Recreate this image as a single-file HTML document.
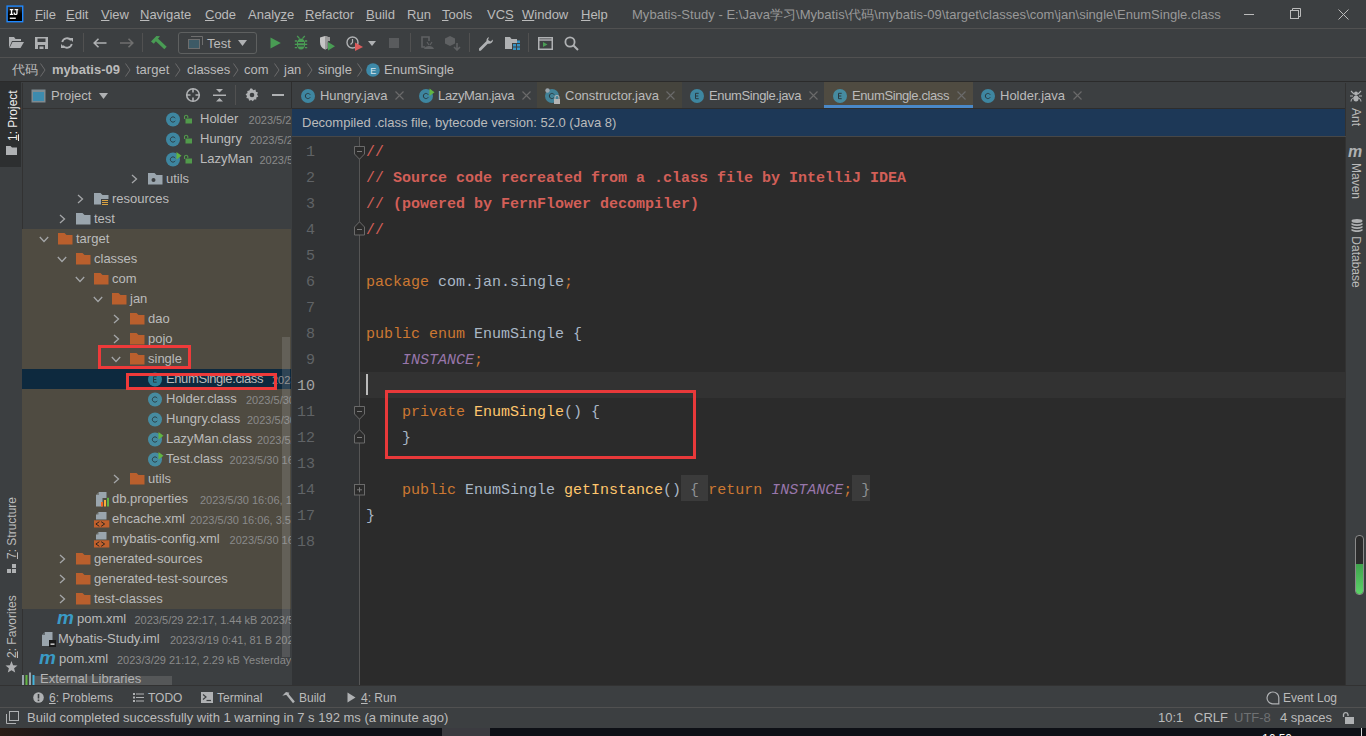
<!DOCTYPE html>
<html><head><meta charset="utf-8">
<style>
*{margin:0;padding:0;box-sizing:border-box}
html,body{width:1366px;height:736px;overflow:hidden;background:#3c3f41;font-family:"Liberation Sans",sans-serif;font-size:13px;color:#bbbbbb}
.a{position:absolute}
.t{position:absolute;white-space:nowrap;line-height:16px}
.sep{position:absolute;background:#323232}
.code{font-family:"Liberation Mono",monospace;font-size:15px;line-height:26px;white-space:pre;color:#a9b7c6}
.kw{color:#cc7832}
.cm{color:#d25f58;font-weight:bold}
.st{color:#9876aa;font-style:italic}
.fn{color:#ffc66d}
.dt{color:#787878}
.fb{background:#3b3b3b}
.u{text-decoration:underline}
</style></head>
<body>
<!-- menubar -->
<div class="a" style="left:0;top:0;width:1366px;height:28px;background:#3c3f41"></div>
<div class="sep" style="left:0;top:28px;width:1366px;height:1px;background:#515151"></div>
<!-- toolbar -->
<div class="sep" style="left:0;top:57px;width:1366px;height:1px;background:#515151"></div>
<!-- breadcrumb -->
<div class="sep" style="left:0;top:81px;width:1366px;height:1px;background:#2b2b2b"></div>
<!-- left stripe -->
<div class="a" style="left:0;top:83px;width:22px;height:603px;background:#3c3f41"></div>
<div class="a" style="left:0;top:82px;width:21px;height:85px;background:#2d2f30"></div>
<!-- project panel -->
<div class="a" style="left:22px;top:83px;width:270px;height:603px;background:#3c3f41;border-left:1px solid #323232"></div>
<div class="sep" style="left:22px;top:108px;width:270px;height:1px"></div>
<!-- editor area -->
<div class="a" style="left:291px;top:82px;width:1054px;height:26px;background:#3c3f41;border-left:1px solid #2e2e2e"></div>
<div class="a" style="left:292px;top:108px;width:1053px;height:1px;background:#2d2d2d"></div>
<div class="a" style="left:292px;top:109px;width:1053px;height:27px;background:#1d3857"></div>
<div class="a" style="left:292px;top:136px;width:1054px;height:550px;background:#2b2b2b"></div>
<!-- right stripe -->
<div class="a" style="left:1345px;top:83px;width:21px;height:603px;background:#3c3f41;border-left:1px solid #323232"></div>
<!-- bottom bar -->
<div class="sep" style="left:0;top:685px;width:1366px;height:1px"></div>
<div class="sep" style="left:0;top:707px;width:1366px;height:1px;background:#515151"></div>
<!-- taskbar -->
<div class="a" style="left:0;top:728px;width:1366px;height:8px;background:#16181b"></div>


<!-- MENU -->
<svg class="a" style="left:6px;top:5px" width="18" height="18" viewBox="0 0 18 18"><defs><linearGradient id="lg" x1="0" y1="0" x2="0" y2="1"><stop offset="0" stop-color="#3a3a3a"/><stop offset="0.5" stop-color="#000"/></linearGradient></defs><rect x="1.1" y="1.1" width="15.6" height="15.6" fill="url(#lg)" stroke="#1e88ff" stroke-width="1.4"/><path d="M3.8 4H7.3V5.2H6.2V8.8H7.3V10H3.8V8.8H4.9V5.2H3.8Z" fill="#fff"/><path d="M8.6 4H12.2V5.2H11.6V8.4A1.7 1.7 0 0 1 9.9 10.1H9.3A1.7 1.7 0 0 1 7.6 8.4V7.6H8.9V8.3A0.5 0.5 0 0 0 9.4 8.8H9.8A0.5 0.5 0 0 0 10.3 8.3V5.2H8.6Z" fill="#fff"/><rect x="3.8" y="12.6" width="6" height="1.3" fill="#fff"/></svg>
<div class="t" style="left:35px;top:7px"><u>F</u>ile</div>
<div class="t" style="left:66px;top:7px"><u>E</u>dit</div>
<div class="t" style="left:101px;top:7px"><u>V</u>iew</div>
<div class="t" style="left:140px;top:7px"><u>N</u>avigate</div>
<div class="t" style="left:205px;top:7px"><u>C</u>ode</div>
<div class="t" style="left:248px;top:7px">Analy<u>z</u>e</div>
<div class="t" style="left:305px;top:7px"><u>R</u>efactor</div>
<div class="t" style="left:366px;top:7px"><u>B</u>uild</div>
<div class="t" style="left:407px;top:7px">R<u>u</u>n</div>
<div class="t" style="left:442px;top:7px"><u>T</u>ools</div>
<div class="t" style="left:487px;top:7px">VC<u>S</u></div>
<div class="t" style="left:522px;top:7px"><u>W</u>indow</div>
<div class="t" style="left:581px;top:7px"><u>H</u>elp</div>
<div class="t" style="left:632px;top:7px;color:#999;letter-spacing:0.03px">Mybatis-Study - E:\Java学习\Mybatis\代码\mybatis-09\target\classes\com\jan\single\EnumSingle.class</div>
<div class="a" style="left:1244px;top:14px;width:10px;height:1px;background:#bbb"></div>
<svg class="a" style="left:1290px;top:8px" width="12" height="12"><rect x="0.5" y="2.5" width="8" height="8" fill="none" stroke="#bbb"/><path d="M2.5 2.5V0.5H10.5V8.5H8.5" fill="none" stroke="#bbb"/></svg>
<svg class="a" style="left:1338px;top:9px" width="11" height="11"><path d="M0.5 0.5L10.5 10.5M10.5 0.5L0.5 10.5" stroke="#bbb" stroke-width="1"/></svg>
<!-- TOOLBAR -->
<svg class="a" style="left:8px;top:37px" width="16" height="12" viewBox="0 0 16 12"><path d="M1 0H6L7.5 2H13V4H4L1 11Z" fill="#afb1b3"/><path d="M4.5 5H16L12.5 11H1.5Z" fill="#afb1b3"/></svg>
<svg class="a" style="left:35px;top:37px" width="13" height="12" viewBox="0 0 13 12"><path d="M0 0H13V12H0Z M2.5 1.5V5H10.5V1.5Z M3 8H10V12H3Z" fill="#afb1b3" fill-rule="evenodd"/><rect x="4.5" y="9.5" width="4" height="2.5" fill="#afb1b3"/></svg>
<svg class="a" style="left:60px;top:37px" width="14" height="12" viewBox="0 0 14 12"><path d="M2.2 5A5 5 0 0 1 11 3.2" fill="none" stroke="#afb1b3" stroke-width="1.8"/><path d="M9 1H13V5Z" fill="#afb1b3"/><path d="M11.8 7A5 5 0 0 1 3 8.8" fill="none" stroke="#afb1b3" stroke-width="1.8"/><path d="M5 11H1V7Z" fill="#afb1b3"/></svg>
<div class="a" style="left:83px;top:33px;width:1px;height:19px;background:#515151"></div>
<svg class="a" style="left:93px;top:38px" width="14" height="10" viewBox="0 0 14 10"><path d="M1 5H13.5M5.5 0.8L1.2 5L5.5 9.2" fill="none" stroke="#afb1b3" stroke-width="1.6"/></svg>
<svg class="a" style="left:120px;top:38px" width="14" height="10" viewBox="0 0 14 10"><path d="M0 5H12.5M8.5 0.8L12.8 5L8.5 9.2" fill="none" stroke="#6f6f6f" stroke-width="1.6"/></svg>
<div class="a" style="left:142px;top:33px;width:1px;height:19px;background:#515151"></div>
<svg class="a" style="left:151px;top:35px" width="16" height="16" viewBox="0 0 16 16"><path d="M0 6.5L5.4 1L9 1.2L2.8 8.8Z" fill="#499c54"/><path d="M5.5 4.5L14.5 13" stroke="#499c54" stroke-width="3.4"/></svg>
<div class="a" style="left:178px;top:32px;width:79px;height:22px;border:1px solid #5e6060;border-radius:3px"></div>
<svg class="a" style="left:188px;top:36px" width="15" height="13" viewBox="0 0 15 13"><path d="M3 0.5H14.5V9" fill="none" stroke="#6e6e6e"/><rect x="0.5" y="3.5" width="11" height="9" fill="#3d5a66" stroke="#6e6e6e"/></svg>
<div class="t" style="left:207px;top:36px">Test</div>
<svg class="a" style="left:238px;top:40px" width="9" height="6"><path d="M0 0H9L4.5 6Z" fill="#afb1b3"/></svg>
<svg class="a" style="left:270px;top:37px" width="11" height="12"><path d="M0.5 0.5L10.8 6L0.5 11.5Z" fill="#499c54"/></svg>
<svg class="a" style="left:294px;top:35px" width="14" height="15" viewBox="0 0 14 15"><path d="M3.2 1L5.6 3.6M10.8 1L8.4 3.6" stroke="#499c54" stroke-width="1.3"/><ellipse cx="7" cy="9" rx="4.2" ry="5.6" fill="#499c54"/><path d="M0.8 6H3M11 6H13.2M0.8 9.4H3M11 9.4H13.2M0.8 12.6H3M11 12.6H13.2" stroke="#499c54" stroke-width="1.4"/><path d="M4 7.6H10M4 10.8H10" stroke="#3c3f41" stroke-width="1.2"/></svg>
<svg class="a" style="left:320px;top:36px" width="16" height="15" viewBox="0 0 16 15"><path d="M0 1.5L5 0L10 1.5V5H7.5V12.5L5 13.5C1.5 12 0 9.5 0 6Z" fill="#c5c5c5"/><path d="M5 0L10 1.5V5H8.5A1.5 1.5 0 0 0 7 6.5V12.8L5 13.5Z" fill="#9a9a9a"/><path d="M8 6L15 10.2L8 14.5Z" fill="#499c54"/></svg>
<svg class="a" style="left:346px;top:36px" width="17" height="15" viewBox="0 0 17 15"><circle cx="6.5" cy="6.5" r="5.5" fill="none" stroke="#afb1b3" stroke-width="1.4"/><path d="M6.5 3V6.5L4.5 8.5" fill="none" stroke="#afb1b3" stroke-width="1.2"/><path d="M9 6.5L17 11L9 15Z" fill="#db5c5c"/></svg>
<svg class="a" style="left:368px;top:41px" width="8" height="5"><path d="M0 0H8L4 5Z" fill="#afb1b3"/></svg>
<div class="a" style="left:389px;top:38px;width:10px;height:10px;background:#595b5d"></div>
<div class="a" style="left:410px;top:33px;width:1px;height:19px;background:#515151"></div>
<svg class="a" style="left:421px;top:36px" width="14" height="14" viewBox="0 0 14 14"><path d="M4 11H1V1H8V5" fill="none" stroke="#5f6163" stroke-width="1.6"/><path d="M3 13C4 9 12 9 13 13Z" fill="#5f6163"/><path d="M6 6L8 9M11 6L9 9" stroke="#5f6163" stroke-width="1.2"/></svg>
<svg class="a" style="left:445px;top:36px" width="16" height="15" viewBox="0 0 16 15"><path d="M5 0L10 2.5V7.5L5 10L0 7.5V2.5Z" fill="#5f6163"/><path d="M12 7V14M9 11L12 14L15 11" fill="none" stroke="#5f6163" stroke-width="1.6"/></svg>
<div class="a" style="left:469px;top:33px;width:1px;height:19px;background:#515151"></div>
<svg class="a" style="left:479px;top:36px" width="15" height="15" viewBox="0 0 15 15"><path d="M1 13.5L8 6.5" stroke="#afb1b3" stroke-width="2.8" stroke-linecap="round"/><path d="M8.5 7.5A4 4 0 0 1 10 1L9 4L11.5 5.5L14 3.5A4 4 0 0 1 8.5 7.5Z" fill="#afb1b3"/></svg>
<svg class="a" style="left:505px;top:37px" width="15" height="13" viewBox="0 0 15 13"><path d="M0 0H5L6.5 2H12V6H7V12H0Z" fill="#afb1b3"/><rect x="8" y="7" width="3" height="2.5" fill="#3592c4"/><rect x="12" y="7" width="3" height="2.5" fill="#3592c4"/><rect x="8" y="10.5" width="3" height="2.5" fill="#3592c4"/><rect x="12" y="10.5" width="3" height="2.5" fill="#3592c4"/><rect x="12" y="3.5" width="3" height="2.5" fill="#3592c4"/></svg>
<div class="a" style="left:528px;top:33px;width:1px;height:19px;background:#515151"></div>
<svg class="a" style="left:538px;top:37px" width="15" height="13" viewBox="0 0 15 13"><rect x="0.75" y="0.75" width="13.5" height="11.5" fill="none" stroke="#afb1b3" stroke-width="1.5"/><path d="M0 3H15" stroke="#afb1b3" stroke-width="1.5"/><path d="M5 5L9.5 7.5L5 10Z" fill="#499c54"/></svg>
<svg class="a" style="left:564px;top:36px" width="15" height="15" viewBox="0 0 15 15"><circle cx="6" cy="6" r="4.6" fill="none" stroke="#afb1b3" stroke-width="1.8"/><path d="M9.5 9.5L14 14" stroke="#afb1b3" stroke-width="2"/></svg>
<!-- BREADCRUMB -->
<div class="t" style="left:12px;top:62px">代码</div>
<svg class="a" style="left:40px;top:63px" width="6" height="14"><path d="M0.5 0.5L5 7L0.5 13.5" fill="none" stroke="#6b6b6b"/></svg>
<div class="t" style="left:52px;top:62px;font-weight:bold">mybatis-09</div>
<svg class="a" style="left:125px;top:63px" width="6" height="14"><path d="M0.5 0.5L5 7L0.5 13.5" fill="none" stroke="#6b6b6b"/></svg>
<div class="t" style="left:136px;top:62px">target</div>
<svg class="a" style="left:175px;top:63px" width="6" height="14"><path d="M0.5 0.5L5 7L0.5 13.5" fill="none" stroke="#6b6b6b"/></svg>
<div class="t" style="left:187px;top:62px">classes</div>
<svg class="a" style="left:233px;top:63px" width="6" height="14"><path d="M0.5 0.5L5 7L0.5 13.5" fill="none" stroke="#6b6b6b"/></svg>
<div class="t" style="left:244px;top:62px">com</div>
<svg class="a" style="left:274px;top:63px" width="6" height="14"><path d="M0.5 0.5L5 7L0.5 13.5" fill="none" stroke="#6b6b6b"/></svg>
<div class="t" style="left:284px;top:62px">jan</div>
<svg class="a" style="left:307px;top:63px" width="6" height="14"><path d="M0.5 0.5L5 7L0.5 13.5" fill="none" stroke="#6b6b6b"/></svg>
<div class="t" style="left:318px;top:62px">single</div>
<svg class="a" style="left:357px;top:63px" width="6" height="14"><path d="M0.5 0.5L5 7L0.5 13.5" fill="none" stroke="#6b6b6b"/></svg>
<svg class="a" style="left:366px;top:63px" width="14" height="14"><circle cx="7" cy="7" r="6.8" fill="#3d89a8"/><text x="4.2" y="10.5" font-family="Liberation Sans" font-size="9" fill="#d8e6ee">E</text></svg>
<div class="t" style="left:384px;top:62px">EnumSingle</div>

<!-- LEFT STRIPE labels -->
<div class="t" style="left:-12px;top:108px;width:50px;transform:rotate(-90deg);transform-origin:center;font-size:12px;color:#ececec;text-align:center"><u>1</u>: Project</div>
<svg class="a" style="left:6px;top:146px" width="11" height="9" viewBox="0 0 11 9"><path d="M0 0H4.5L6 1.5H11V9H0Z" fill="#afb1b3"/></svg>
<div class="t" style="left:-20px;top:520px;width:64px;transform:rotate(-90deg);transform-origin:center;font-size:12px;color:#bbb;text-align:center"><u>7</u>: Structure</div>
<svg class="a" style="left:7px;top:564px" width="10" height="10" viewBox="0 0 10 10"><rect x="5" y="0" width="4" height="4" fill="#afb1b3"/><rect x="5" y="5" width="4" height="4" fill="#afb1b3"/><rect x="0" y="5" width="4" height="4" fill="#afb1b3"/></svg>
<div class="t" style="left:-18px;top:620px;width:60px;transform:rotate(-90deg);transform-origin:center;font-size:12px;color:#bbb;text-align:center"><u>2</u>: Favorites</div>
<svg class="a" style="left:5px;top:661px" width="13" height="12" viewBox="0 0 13 12"><path d="M6.5 0L8.1 4.2L12.5 4.4L9.1 7.2L10.2 11.6L6.5 9.2L2.8 11.6L3.9 7.2L0.5 4.4L4.9 4.2Z" fill="#afb1b3"/></svg>
<!-- PROJECT HEADER -->
<svg class="a" style="left:31px;top:89px" width="15" height="14" viewBox="0 0 15 14"><rect x="0.5" y="0.5" width="14" height="13" fill="#7f8b91"/><rect x="2" y="3" width="11" height="9" fill="#3d8bae"/></svg>
<div class="t" style="left:51px;top:88px">Project</div>
<svg class="a" style="left:99px;top:93px" width="9" height="6"><path d="M0 0H9L4.5 6Z" fill="#afb1b3"/></svg>
<svg class="a" style="left:185px;top:87px" width="16" height="16" viewBox="0 0 16 16"><circle cx="8" cy="8" r="6.3" fill="none" stroke="#afb1b3" stroke-width="1.6"/><path d="M8 1.5V5.5M8 10.5V14.5M1.5 8H5.5M10.5 8H14.5" stroke="#afb1b3" stroke-width="1.6"/></svg>
<svg class="a" style="left:213px;top:89px" width="13" height="13" viewBox="0 0 13 13"><path d="M3 0H10L6.5 3.5Z M0 5.5H13V7H0Z M6.5 9L10 12.5H3Z" fill="#afb1b3"/></svg>
<div class="a" style="left:235px;top:85px;width:1px;height:20px;background:#515151"></div>
<svg class="a" style="left:245px;top:88px" width="14" height="14" viewBox="0 0 14 14"><path d="M7 0.5L8.3 2.2L10.5 1.6L10.9 3.7L13 4.5L12.1 6.5L13.3 8.4L11.3 9.4L11.3 11.6L9.1 11.5L7.9 13.3L6.2 11.9L4.1 12.7L3.5 10.6L1.3 10.1L2 8L0.6 6.3L2.5 5.1L2.3 2.9L4.4 2.6L5.3 0.6Z" fill="#afb1b3"/><circle cx="7" cy="7" r="2.3" fill="#3c3f41"/></svg>
<div class="a" style="left:272px;top:94px;width:12px;height:2px;background:#afb1b3"></div>
<div class="a" style="left:22px;top:109px;width:269px;height:576px;overflow:hidden">
<div class="a" style="left:0;top:120px;width:269px;height:380px;background:#4f4b41"></div>
<div class="a" style="left:0;top:260px;width:269px;height:20px;background:#0d293e"></div>
</div>
<div class="a" style="left:0;top:0;width:291px;height:685px;overflow:hidden">
<svg class="a" style="left:166px;top:112px" width="16" height="15" viewBox="0 0 16 15"><circle cx="7" cy="7.5" r="7" fill="#3e86a0"/><path d="M9.2 6.2A2.6 2.6 0 1 0 9.2 8.8" fill="none" stroke="#2a3a40" stroke-width="1"/></svg>
<svg class="a" style="left:183px;top:114px" width="10" height="10" viewBox="0 0 10 10"><path d="M1.5 5V2.5A1.7 1.7 0 0 1 4.8 2.5V4" fill="none" stroke="#519a4b" stroke-width="1.1"/><rect x="2.5" y="4.5" width="6.5" height="5" fill="#519a4b"/></svg>
<div class="t" style="left:200px;top:111px">Holder</div>
<div class="t" style="left:248.6px;top:111px;color:#8a8a8a;font-size:11px;margin-top:1px">2023/5/2</div>
<svg class="a" style="left:166px;top:132px" width="16" height="15" viewBox="0 0 16 15"><circle cx="7" cy="7.5" r="7" fill="#3e86a0"/><path d="M9.2 6.2A2.6 2.6 0 1 0 9.2 8.8" fill="none" stroke="#2a3a40" stroke-width="1"/></svg>
<svg class="a" style="left:183px;top:134px" width="10" height="10" viewBox="0 0 10 10"><path d="M1.5 5V2.5A1.7 1.7 0 0 1 4.8 2.5V4" fill="none" stroke="#519a4b" stroke-width="1.1"/><rect x="2.5" y="4.5" width="6.5" height="5" fill="#519a4b"/></svg>
<div class="t" style="left:200px;top:131px">Hungry</div>
<div class="t" style="left:250px;top:131px;color:#8a8a8a;font-size:11px;margin-top:1px">2023/5/2</div>
<svg class="a" style="left:166px;top:152px" width="16" height="15" viewBox="0 0 16 15"><circle cx="7" cy="7.5" r="7" fill="#3e86a0"/><path d="M9.2 6.2A2.6 2.6 0 1 0 9.2 8.8" fill="none" stroke="#2a3a40" stroke-width="1"/><path d="M10.5 0L15.5 3.8L10.5 7.6Z" fill="#62b543"/></svg>
<svg class="a" style="left:183px;top:154px" width="10" height="10" viewBox="0 0 10 10"><path d="M1.5 5V2.5A1.7 1.7 0 0 1 4.8 2.5V4" fill="none" stroke="#519a4b" stroke-width="1.1"/><rect x="2.5" y="4.5" width="6.5" height="5" fill="#519a4b"/></svg>
<div class="t" style="left:200px;top:151px">LazyMan</div>
<div class="t" style="left:259.5px;top:151px;color:#8a8a8a;font-size:11px;margin-top:1px">2023/5/</div>
<svg class="a" style="left:131px;top:174px" width="7" height="10" viewBox="0 0 7 10"><path d="M1 1L5.5 5L1 9" fill="none" stroke="#a4a6a8" stroke-width="1.3"/></svg>
<svg class="a" style="left:148px;top:173px" width="15" height="12" viewBox="0 0 15 12"><path d="M0 0H6.5L8.5 2H14.5V11.5H0Z" fill="#9aa5ad"/><circle cx="5.5" cy="7" r="2" fill="#3c3f41"/></svg>
<div class="t" style="left:166px;top:171px">utils</div>
<svg class="a" style="left:77px;top:194px" width="7" height="10" viewBox="0 0 7 10"><path d="M1 1L5.5 5L1 9" fill="none" stroke="#a4a6a8" stroke-width="1.3"/></svg>
<svg class="a" style="left:94px;top:193px" width="15" height="12" viewBox="0 0 15 12"><path d="M0 0H6.5L8.5 2H14.5V11.5H0Z" fill="#9aa5ad"/><path d="M8 6.5H15M8 8.5H15M8 10.5H15" stroke="#e0a93a" stroke-width="1"/><rect x="7" y="5" width="8" height="7" fill="none"/></svg>
<svg class="a" style="left:101px;top:199px" width="8" height="7" viewBox="0 0 8 7"><rect width="8" height="7" fill="#3c3f41"/><path d="M1 1.5H7M1 3.5H7M1 5.5H7" stroke="#d9a343" stroke-width="1"/></svg>
<div class="t" style="left:112px;top:191px">resources</div>
<svg class="a" style="left:59px;top:214px" width="7" height="10" viewBox="0 0 7 10"><path d="M1 1L5.5 5L1 9" fill="none" stroke="#a4a6a8" stroke-width="1.3"/></svg>
<svg class="a" style="left:76px;top:213px" width="15" height="12" viewBox="0 0 15 12"><path d="M0 0H6.5L8.5 2H14.5V11.5H0Z" fill="#9aa5ad"/></svg>
<div class="t" style="left:94px;top:211px">test</div>
<svg class="a" style="left:39px;top:236px" width="10" height="7" viewBox="0 0 10 7"><path d="M0.8 1L5 5.5L9.2 1" fill="none" stroke="#a4a6a8" stroke-width="1.3"/></svg>
<svg class="a" style="left:58px;top:233px" width="15" height="12" viewBox="0 0 15 12"><path d="M0 0H6.5L8.5 2H14.5V11.5H0Z" fill="#b95f2d"/></svg>
<div class="t" style="left:76px;top:231px">target</div>
<svg class="a" style="left:57px;top:256px" width="10" height="7" viewBox="0 0 10 7"><path d="M0.8 1L5 5.5L9.2 1" fill="none" stroke="#a4a6a8" stroke-width="1.3"/></svg>
<svg class="a" style="left:76px;top:253px" width="15" height="12" viewBox="0 0 15 12"><path d="M0 0H6.5L8.5 2H14.5V11.5H0Z" fill="#b95f2d"/></svg>
<div class="t" style="left:94px;top:251px">classes</div>
<svg class="a" style="left:75px;top:276px" width="10" height="7" viewBox="0 0 10 7"><path d="M0.8 1L5 5.5L9.2 1" fill="none" stroke="#a4a6a8" stroke-width="1.3"/></svg>
<svg class="a" style="left:94px;top:273px" width="15" height="12" viewBox="0 0 15 12"><path d="M0 0H6.5L8.5 2H14.5V11.5H0Z" fill="#b95f2d"/></svg>
<div class="t" style="left:112px;top:271px">com</div>
<svg class="a" style="left:93px;top:296px" width="10" height="7" viewBox="0 0 10 7"><path d="M0.8 1L5 5.5L9.2 1" fill="none" stroke="#a4a6a8" stroke-width="1.3"/></svg>
<svg class="a" style="left:112px;top:293px" width="15" height="12" viewBox="0 0 15 12"><path d="M0 0H6.5L8.5 2H14.5V11.5H0Z" fill="#b95f2d"/></svg>
<div class="t" style="left:130px;top:291px">jan</div>
<svg class="a" style="left:113px;top:314px" width="7" height="10" viewBox="0 0 7 10"><path d="M1 1L5.5 5L1 9" fill="none" stroke="#a4a6a8" stroke-width="1.3"/></svg>
<svg class="a" style="left:130px;top:313px" width="15" height="12" viewBox="0 0 15 12"><path d="M0 0H6.5L8.5 2H14.5V11.5H0Z" fill="#b95f2d"/></svg>
<div class="t" style="left:148px;top:311px">dao</div>
<svg class="a" style="left:113px;top:334px" width="7" height="10" viewBox="0 0 7 10"><path d="M1 1L5.5 5L1 9" fill="none" stroke="#a4a6a8" stroke-width="1.3"/></svg>
<svg class="a" style="left:130px;top:333px" width="15" height="12" viewBox="0 0 15 12"><path d="M0 0H6.5L8.5 2H14.5V11.5H0Z" fill="#b95f2d"/></svg>
<div class="t" style="left:148px;top:331px">pojo</div>
<svg class="a" style="left:111px;top:356px" width="10" height="7" viewBox="0 0 10 7"><path d="M0.8 1L5 5.5L9.2 1" fill="none" stroke="#a4a6a8" stroke-width="1.3"/></svg>
<svg class="a" style="left:130px;top:353px" width="15" height="12" viewBox="0 0 15 12"><path d="M0 0H6.5L8.5 2H14.5V11.5H0Z" fill="#b95f2d"/></svg>
<div class="t" style="left:148px;top:351px">single</div>
<svg class="a" style="left:148px;top:372px" width="16" height="15" viewBox="0 0 16 15"><circle cx="7" cy="7.5" r="7" fill="#2b7e96"/><path d="M8.7 4.8H5.5V10.2H8.7M5.5 7.5H8.3" fill="none" stroke="#2a3a40" stroke-width="1"/></svg>
<div class="t" style="left:166px;top:371px;letter-spacing:-0.39px">EnumSingle.class</div>
<div class="t" style="left:272px;top:371px;color:#8a8a8a;font-size:11px;margin-top:1px">2023/5/30 16:06</div>
<svg class="a" style="left:148px;top:392px" width="16" height="15" viewBox="0 0 16 15"><circle cx="7" cy="7.5" r="7" fill="#468ba0"/><path d="M9.2 6.2A2.6 2.6 0 1 0 9.2 8.8" fill="none" stroke="#2a3a40" stroke-width="1"/></svg>
<div class="t" style="left:166px;top:391px">Holder.class</div>
<div class="t" style="left:246px;top:391px;color:#8a8a8a;font-size:11px;margin-top:1px">2023/5/30 16:06</div>
<svg class="a" style="left:148px;top:412px" width="16" height="15" viewBox="0 0 16 15"><circle cx="7" cy="7.5" r="7" fill="#468ba0"/><path d="M9.2 6.2A2.6 2.6 0 1 0 9.2 8.8" fill="none" stroke="#2a3a40" stroke-width="1"/></svg>
<div class="t" style="left:166px;top:411px">Hungry.class</div>
<div class="t" style="left:247px;top:411px;color:#8a8a8a;font-size:11px;margin-top:1px">2023/5/30 16:06</div>
<svg class="a" style="left:148px;top:432px" width="16" height="15" viewBox="0 0 16 15"><circle cx="7" cy="7.5" r="7" fill="#468ba0"/><path d="M9.2 6.2A2.6 2.6 0 1 0 9.2 8.8" fill="none" stroke="#2a3a40" stroke-width="1"/><path d="M10.5 0L15.5 3.8L10.5 7.6Z" fill="#62b543"/></svg>
<div class="t" style="left:166px;top:431px">LazyMan.class</div>
<div class="t" style="left:257px;top:431px;color:#8a8a8a;font-size:11px;margin-top:1px">2023/5/30 16:06</div>
<svg class="a" style="left:148px;top:452px" width="16" height="15" viewBox="0 0 16 15"><circle cx="7" cy="7.5" r="7" fill="#468ba0"/><path d="M9.2 6.2A2.6 2.6 0 1 0 9.2 8.8" fill="none" stroke="#2a3a40" stroke-width="1"/><path d="M10.5 0L15.5 3.8L10.5 7.6Z" fill="#62b543"/></svg>
<div class="t" style="left:166px;top:451px">Test.class</div>
<div class="t" style="left:229.6px;top:451px;color:#8a8a8a;font-size:11px;margin-top:1px">2023/5/30 16:06</div>
<svg class="a" style="left:113px;top:474px" width="7" height="10" viewBox="0 0 7 10"><path d="M1 1L5.5 5L1 9" fill="none" stroke="#a4a6a8" stroke-width="1.3"/></svg>
<svg class="a" style="left:130px;top:473px" width="15" height="12" viewBox="0 0 15 12"><path d="M0 0H6.5L8.5 2H14.5V11.5H0Z" fill="#b95f2d"/></svg>
<div class="t" style="left:148px;top:471px">utils</div>
<svg class="a" style="left:96px;top:492px" width="14" height="15" viewBox="0 0 14 15"><path d="M3 0H10.5V6H6.5V14.5H0V3Z" fill="#9aa5ad"/><path d="M0 3L3 0V3Z" fill="#4f4b41" opacity="0.5"/><rect x="5" y="10" width="2" height="4.5" fill="#f26522"/><rect x="8" y="8" width="2" height="6.5" fill="#f4af3d"/><rect x="11" y="5.8" width="2" height="8.7" fill="#62b543"/></svg>
<div class="t" style="left:112px;top:491px">db.properties</div>
<div class="t" style="left:200px;top:491px;color:#8a8a8a;font-size:11px;margin-top:1px">2023/5/30 16:06, 1.2 kB</div>
<svg class="a" style="left:94px;top:512px" width="16" height="16" viewBox="0 0 16 16"><path d="M4.5 0H12.5V7.5H2V2.5Z" fill="#9aa5ad"/><path d="M2 2.5L4.5 0V2.5Z" fill="#4f4b41" opacity="0.6"/><rect x="0" y="8.3" width="15.3" height="7.2" fill="#c1602c"/><path d="M5.3 9.7L1.9 12L5.3 14.3M7.2 9.7L10.6 12L7.2 14.3" fill="none" stroke="#2d2520" stroke-width="1"/></svg>
<div class="t" style="left:112px;top:511px">ehcache.xml</div>
<div class="t" style="left:190px;top:511px;color:#8a8a8a;font-size:11px;margin-top:1px">2023/5/30 16:06, 3.5 kB</div>
<svg class="a" style="left:94px;top:532px" width="16" height="16" viewBox="0 0 16 16"><path d="M4.5 0H12.5V7.5H2V2.5Z" fill="#9aa5ad"/><path d="M2 2.5L4.5 0V2.5Z" fill="#4f4b41" opacity="0.6"/><rect x="0" y="8.3" width="15.3" height="7.2" fill="#c1602c"/><path d="M5.3 9.7L1.9 12L5.3 14.3M7.2 9.7L10.6 12L7.2 14.3" fill="none" stroke="#2d2520" stroke-width="1"/></svg>
<div class="t" style="left:112px;top:531px">mybatis-config.xml</div>
<div class="t" style="left:229.6px;top:531px;color:#8a8a8a;font-size:11px;margin-top:1px">2023/5/30 16:06</div>
<svg class="a" style="left:59px;top:554px" width="7" height="10" viewBox="0 0 7 10"><path d="M1 1L5.5 5L1 9" fill="none" stroke="#a4a6a8" stroke-width="1.3"/></svg>
<svg class="a" style="left:76px;top:553px" width="15" height="12" viewBox="0 0 15 12"><path d="M0 0H6.5L8.5 2H14.5V11.5H0Z" fill="#b95f2d"/></svg>
<div class="t" style="left:94px;top:551px">generated-sources</div>
<svg class="a" style="left:59px;top:574px" width="7" height="10" viewBox="0 0 7 10"><path d="M1 1L5.5 5L1 9" fill="none" stroke="#a4a6a8" stroke-width="1.3"/></svg>
<svg class="a" style="left:76px;top:573px" width="15" height="12" viewBox="0 0 15 12"><path d="M0 0H6.5L8.5 2H14.5V11.5H0Z" fill="#b95f2d"/></svg>
<div class="t" style="left:94px;top:571px">generated-test-sources</div>
<svg class="a" style="left:59px;top:594px" width="7" height="10" viewBox="0 0 7 10"><path d="M1 1L5.5 5L1 9" fill="none" stroke="#a4a6a8" stroke-width="1.3"/></svg>
<svg class="a" style="left:76px;top:593px" width="15" height="12" viewBox="0 0 15 12"><path d="M0 0H6.5L8.5 2H14.5V11.5H0Z" fill="#b95f2d"/></svg>
<div class="t" style="left:94px;top:591px">test-classes</div>
<div class="t" style="left:57px;top:609px;font-family:'Liberation Sans';font-weight:bold;font-style:italic;font-size:19px;line-height:18px;color:#3a9bc6;letter-spacing:-0.5px">m</div>
<div class="t" style="left:77px;top:611px">pom.xml</div>
<div class="t" style="left:134.5px;top:611px;color:#8a8a8a;font-size:11px;margin-top:1px">2023/5/29 22:17, 1.44 kB  2023/5/29</div>
<svg class="a" style="left:42px;top:632px" width="14" height="15" viewBox="0 0 14 15"><path d="M3 0H10.5V14H0V3Z" fill="#9aa5ad"/><path d="M0 3L3 0V3Z" fill="#3c3f41" opacity="0.6"/><rect x="7" y="8" width="7" height="7" fill="#1a1a1a"/><rect x="8.5" y="11.5" width="4" height="1.3" fill="#e8e8e8"/></svg>
<div class="t" style="left:58px;top:631px">Mybatis-Study.iml</div>
<div class="t" style="left:170px;top:631px;color:#8a8a8a;font-size:11px;margin-top:1px">2023/3/19 0:41, 81 B  2023</div>
<div class="t" style="left:39px;top:649px;font-family:'Liberation Sans';font-weight:bold;font-style:italic;font-size:19px;line-height:18px;color:#3a9bc6;letter-spacing:-0.5px">m</div>
<div class="t" style="left:59px;top:651px">pom.xml</div>
<div class="t" style="left:117px;top:651px;color:#8a8a8a;font-size:11px;margin-top:1px">2023/3/29 21:12, 2.29 kB  Yesterday</div>
<svg class="a" style="left:22px;top:672px" width="14" height="14" viewBox="0 0 14 14"><rect x="0" y="3" width="2" height="11" fill="#9aa5ad"/><rect x="3.5" y="3" width="2" height="11" fill="#62b543"/><rect x="7" y="0.5" width="2" height="13.5" fill="#9aa5ad"/><rect x="10.5" y="3" width="2" height="11" fill="#40b6e0"/></svg>
<div class="t" style="left:40px;top:671px">External Libraries</div>
<div class="a" style="left:282px;top:337px;width:8px;height:320px;background:rgba(180,180,180,0.2)"></div>
</div>
<div class="a" style="left:98px;top:345px;width:93px;height:24px;border:3px solid #ee3a3a"></div>
<div class="a" style="left:126px;top:373px;width:151px;height:17px;border:3px solid #ee3a3a"></div>
<div class="a" style="left:537px;top:82px;width:145px;height:26px;background:#45443d"></div>
<div class="a" style="left:824px;top:82px;width:149px;height:26px;background:#4f4b41"></div>
<div class="a" style="left:824px;top:105px;width:149px;height:3px;background:#4a88c7"></div>
<svg class="a" style="left:301px;top:88px" width="17" height="17" viewBox="0 0 17 17"><circle cx="7" cy="8" r="7" fill="#3e86a0"/><path d="M9.2 6.7A2.6 2.6 0 1 0 9.2 9.3" fill="none" stroke="#2a3a40" stroke-width="1"/></svg>
<div class="t" style="left:320px;top:88px;letter-spacing:-0.1px">Hungry.java</div>
<svg class="a" style="left:395px;top:91px" width="9" height="9" viewBox="0 0 9 9"><path d="M0.5 0.5L8.5 8.5M8.5 0.5L0.5 8.5" stroke="#6b6b6b" stroke-width="1.1"/></svg>
<svg class="a" style="left:419px;top:88px" width="17" height="17" viewBox="0 0 17 17"><circle cx="7" cy="8" r="7" fill="#3e86a0"/><path d="M9.2 6.7A2.6 2.6 0 1 0 9.2 9.3" fill="none" stroke="#2a3a40" stroke-width="1"/><path d="M10.5 0.5L15.5 4.3L10.5 8.1Z" fill="#62b543"/></svg>
<div class="t" style="left:438px;top:88px;letter-spacing:-0.35px">LazyMan.java</div>
<svg class="a" style="left:522px;top:91px" width="9" height="9" viewBox="0 0 9 9"><path d="M0.5 0.5L8.5 8.5M8.5 0.5L0.5 8.5" stroke="#6b6b6b" stroke-width="1.1"/></svg>
<svg class="a" style="left:545px;top:88px" width="17" height="17" viewBox="0 0 17 17"><circle cx="7" cy="8" r="7" fill="#428297"/><path d="M9.2 6.7A2.6 2.6 0 1 0 9.2 9.3" fill="none" stroke="#2a3a40" stroke-width="1"/><circle cx="2.5" cy="2.5" r="2.2" fill="#9aa5ad"/><rect x="9" y="11" width="6" height="5" fill="#b4b4b4"/><path d="M10 11V9.5A2 2 0 0 1 14 9.5V11" fill="none" stroke="#b4b4b4" stroke-width="1.1"/></svg>
<div class="t" style="left:565px;top:88px;letter-spacing:0px">Constructor.java</div>
<svg class="a" style="left:666px;top:91px" width="9" height="9" viewBox="0 0 9 9"><path d="M0.5 0.5L8.5 8.5M8.5 0.5L0.5 8.5" stroke="#6b6b6b" stroke-width="1.1"/></svg>
<svg class="a" style="left:690px;top:88px" width="17" height="17" viewBox="0 0 17 17"><circle cx="7" cy="8" r="7" fill="#3e86a0"/><path d="M8.7 5.3H5.5V10.7H8.7M5.5 8H8.3" fill="none" stroke="#2a3a40" stroke-width="1"/></svg>
<div class="t" style="left:709px;top:88px;letter-spacing:-0.37px">EnumSingle.java</div>
<svg class="a" style="left:809px;top:91px" width="9" height="9" viewBox="0 0 9 9"><path d="M0.5 0.5L8.5 8.5M8.5 0.5L0.5 8.5" stroke="#6b6b6b" stroke-width="1.1"/></svg>
<svg class="a" style="left:833px;top:88px" width="17" height="17" viewBox="0 0 17 17"><circle cx="7" cy="8" r="7" fill="#468ba0"/><path d="M8.7 5.3H5.5V10.7H8.7M5.5 8H8.3" fill="none" stroke="#2a3a40" stroke-width="1"/></svg>
<div class="t" style="left:852px;top:88px;letter-spacing:-0.39px">EnumSingle.class</div>
<svg class="a" style="left:957px;top:91px" width="9" height="9" viewBox="0 0 9 9"><path d="M0.5 0.5L8.5 8.5M8.5 0.5L0.5 8.5" stroke="#6b6b6b" stroke-width="1.1"/></svg>
<svg class="a" style="left:981px;top:88px" width="17" height="17" viewBox="0 0 17 17"><circle cx="7" cy="8" r="7" fill="#3e86a0"/><path d="M9.2 6.7A2.6 2.6 0 1 0 9.2 9.3" fill="none" stroke="#2a3a40" stroke-width="1"/></svg>
<div class="t" style="left:1000px;top:88px;letter-spacing:0px">Holder.java</div>
<svg class="a" style="left:1073px;top:91px" width="9" height="9" viewBox="0 0 9 9"><path d="M0.5 0.5L8.5 8.5M8.5 0.5L0.5 8.5" stroke="#6b6b6b" stroke-width="1.1"/></svg>
<div class="a" style="left:292px;top:136px;width:1054px;height:1px;background:#474747"></div>
<div class="t" style="left:302px;top:115px">Decompiled .class file, bytecode version: 52.0 (Java 8)</div>
<div class="a" style="left:292px;top:137px;width:68px;height:548px;background:#313335"></div>
<div class="a" style="left:360px;top:372px;width:985px;height:26px;background:#323232"></div>
<div class="a" style="left:681px;top:475px;width:27px;height:26px;background:#3b3b3b"></div>
<div class="a" style="left:852px;top:475px;width:18px;height:26px;background:#3b3b3b"></div>
<div class="a" style="left:359px;top:137px;width:1px;height:548px;background:#555555"></div>
<div class="code a" style="left:291px;top:140px;width:24px;text-align:right;color:#606366">1</div>
<div class="code a" style="left:366px;top:140px"><span class="cm"><span style="font-weight:normal">//</span></span></div>
<div class="code a" style="left:291px;top:166px;width:24px;text-align:right;color:#606366">2</div>
<div class="code a" style="left:366px;top:166px"><span class="cm"><span style="font-weight:normal">//</span> Source code recreated from a .class file by IntelliJ IDEA</span></div>
<div class="code a" style="left:291px;top:192px;width:24px;text-align:right;color:#606366">3</div>
<div class="code a" style="left:366px;top:192px"><span class="cm"><span style="font-weight:normal">//</span> (powered by FernFlower decompiler)</span></div>
<div class="code a" style="left:291px;top:218px;width:24px;text-align:right;color:#606366">4</div>
<div class="code a" style="left:366px;top:218px"><span class="cm"><span style="font-weight:normal">//</span></span></div>
<div class="code a" style="left:291px;top:244px;width:24px;text-align:right;color:#606366">5</div>
<div class="code a" style="left:291px;top:270px;width:24px;text-align:right;color:#606366">6</div>
<div class="code a" style="left:366px;top:270px"><span class="kw">package</span> com.jan.single<span class="kw">;</span></div>
<div class="code a" style="left:291px;top:296px;width:24px;text-align:right;color:#606366">7</div>
<div class="code a" style="left:291px;top:322px;width:24px;text-align:right;color:#606366">8</div>
<div class="code a" style="left:366px;top:322px"><span class="kw">public enum</span> EnumSingle {</div>
<div class="code a" style="left:291px;top:348px;width:24px;text-align:right;color:#606366">9</div>
<div class="code a" style="left:366px;top:348px">    <span class="st">INSTANCE</span><span class="kw">;</span></div>
<div class="code a" style="left:291px;top:374px;width:24px;text-align:right;color:#a4a3a3">10</div>
<div class="code a" style="left:291px;top:400px;width:24px;text-align:right;color:#606366">11</div>
<div class="code a" style="left:366px;top:400px">    <span class="kw">private</span> <span class="fn">EnumSingle</span>() {</div>
<div class="code a" style="left:291px;top:426px;width:24px;text-align:right;color:#606366">12</div>
<div class="code a" style="left:366px;top:426px">    }</div>
<div class="code a" style="left:291px;top:452px;width:24px;text-align:right;color:#606366">13</div>
<div class="code a" style="left:291px;top:478px;width:24px;text-align:right;color:#606366">14</div>
<div class="code a" style="left:366px;top:478px">    <span class="kw">public</span> EnumSingle <span class="fn">getInstance</span>() <span style="color:#8e9194">{</span> <span class="kw">return</span> <span class="st">INSTANCE</span><span class="kw">;</span> <span style="color:#8e9194">}</span></div>
<div class="code a" style="left:291px;top:504px;width:24px;text-align:right;color:#606366">17</div>
<div class="code a" style="left:366px;top:504px">}</div>
<div class="code a" style="left:291px;top:530px;width:24px;text-align:right;color:#606366">18</div>
<div class="a" style="left:366px;top:374px;width:2px;height:21px;background:#bbbbbb"></div>
<svg class="a" style="left:354px;top:146px" width="11" height="15" viewBox="0 0 11 15"><path d="M0.5 0.5H10.5V8L5.5 13.2L0.5 8Z" fill="#2b2b2b" stroke="#6a6a6a"/><path d="M3 5.5H8" stroke="#7a7a7a"/></svg>
<svg class="a" style="left:354px;top:221px" width="11" height="15" viewBox="0 0 11 15"><path d="M0.5 14H10.5V6L5.5 0.8L0.5 6Z" fill="#2b2b2b" stroke="#6a6a6a"/><path d="M3 8.5H8" stroke="#7a7a7a"/></svg>
<svg class="a" style="left:354px;top:406px" width="11" height="15" viewBox="0 0 11 15"><path d="M0.5 0.5H10.5V8L5.5 13.2L0.5 8Z" fill="#2b2b2b" stroke="#6a6a6a"/><path d="M3 5.5H8" stroke="#7a7a7a"/></svg>
<svg class="a" style="left:354px;top:429px" width="11" height="15" viewBox="0 0 11 15"><path d="M0.5 14H10.5V6L5.5 0.8L0.5 6Z" fill="#2b2b2b" stroke="#6a6a6a"/><path d="M3 8.5H8" stroke="#7a7a7a"/></svg>
<svg class="a" style="left:354px;top:484px" width="11" height="12" viewBox="0 0 11 12"><rect x="0.5" y="0.5" width="10" height="10.5" fill="#2b2b2b" stroke="#6a6a6a"/><path d="M3 5.8H8M5.5 3.3V8.3" stroke="#7a7a7a"/></svg>
<div class="a" style="left:385px;top:390px;width:311px;height:69px;border:3px solid #e8393a"></div>
<!-- RIGHT STRIPE -->
<svg class="a" style="left:1350px;top:90px" width="12" height="12" viewBox="0 0 12 12"><path d="M1 1L4 4M11 1L8 4M0 6H3M9 6H12M1 11.5A5 4 0 0 1 11 11.5" fill="none" stroke="#afb1b3" stroke-width="1.1"/><circle cx="6" cy="3.5" r="2" fill="#afb1b3"/><ellipse cx="6" cy="8.5" rx="2.6" ry="3" fill="#afb1b3"/></svg>
<div class="t" style="left:1336px;top:109px;width:40px;transform:rotate(90deg);transform-origin:center;font-size:12px;text-align:center">Ant</div>
<div class="t" style="left:1348px;top:144px;font-weight:bold;font-style:italic;font-size:16px;color:#afb1b3;letter-spacing:-0.5px">m</div>
<div class="t" style="left:1327px;top:173px;width:58px;transform:rotate(90deg);transform-origin:center;font-size:12px;text-align:center">Maven</div>
<svg class="a" style="left:1351px;top:219px" width="12" height="13" viewBox="0 0 12 13"><ellipse cx="6" cy="2" rx="5.5" ry="1.9" fill="#afb1b3"/><path d="M0.5 4 Q6 6.6 11.5 4 V5.8 Q6 8.4 0.5 5.8Z" fill="#afb1b3"/><path d="M0.5 7 Q6 9.6 11.5 7 V8.8 Q6 11.4 0.5 8.8Z" fill="#afb1b3"/><path d="M0.5 10 Q6 12.6 11.5 10 V11.8 Q6 14.4 0.5 11.8Z" fill="#afb1b3"/></svg>
<div class="t" style="left:1321px;top:254px;width:70px;transform:rotate(90deg);transform-origin:center;font-size:12px;text-align:center">Database</div>
<div class="a" style="left:1355px;top:535px;width:9px;height:60px;border:1px solid #8a8a8a;border-radius:4px;background:#2b2b2b;overflow:hidden"><div class="a" style="left:0;top:28px;width:7px;height:31px;background:linear-gradient(#3fa34d,#5ed46a);border-radius:0 0 3px 3px"></div></div>
<div class="a" style="left:34px;top:676px;width:138px;height:9px;background:rgba(150,150,150,0.28)"></div>
<!-- BOTTOM TOOLBAR -->
<svg class="a" style="left:33px;top:692px" width="11" height="11" viewBox="0 0 11 11"><circle cx="5.5" cy="5.5" r="5.3" fill="#afb1b3"/><rect x="4.7" y="2" width="1.6" height="4.5" fill="#3c3f41"/><rect x="4.7" y="7.5" width="1.6" height="1.6" fill="#3c3f41"/></svg>
<div class="t" style="left:49px;top:690px;font-size:12px"><u>6</u>: Problems</div>
<svg class="a" style="left:133px;top:692px" width="11" height="11" viewBox="0 0 11 11"><path d="M0 1H2V3H0Z M3 1.5H11V2.5H3Z M0 4.5H2V6.5H0Z M3 5H11V6H3Z M0 8H2V10H0Z M3 8.5H11V9.5H3Z" fill="#afb1b3"/></svg>
<div class="t" style="left:148px;top:690px;font-size:12px">TODO</div>
<svg class="a" style="left:201px;top:692px" width="12" height="11" viewBox="0 0 12 11"><rect width="12" height="11" fill="#afb1b3"/><path d="M2 2.5L5 5L2 7.5" fill="none" stroke="#3c3f41" stroke-width="1.2"/><path d="M5.5 8.5H10" stroke="#3c3f41" stroke-width="1.2"/></svg>
<div class="t" style="left:217px;top:690px;font-size:12px">Terminal</div>
<svg class="a" style="left:282px;top:691px" width="13" height="13" viewBox="0 0 13 13"><path d="M0.3 4.8L4 1L7.5 1.8L5.8 3.5Z" fill="#afb1b3"/><path d="M3.8 3.3L5.8 2L12.8 10.5L11 12.3Z" fill="#afb1b3"/></svg>
<div class="t" style="left:299px;top:690px;font-size:12px">Build</div>
<svg class="a" style="left:347px;top:692px" width="9" height="11" viewBox="0 0 9 11"><path d="M0.5 0.5L8.5 5.5L0.5 10.5Z" fill="#afb1b3"/></svg>
<div class="t" style="left:361px;top:690px;font-size:12px"><u>4</u>: Run</div>
<svg class="a" style="left:1266px;top:691px" width="14" height="14" viewBox="0 0 14 14"><path d="M12.8 12.8H6.5A5.9 5.9 0 1 1 12.8 6.5Z" fill="none" stroke="#afb1b3" stroke-width="1.2"/></svg>
<div class="t" style="left:1283px;top:690px;font-size:12px">Event Log</div>
<!-- STATUS BAR -->
<svg class="a" style="left:6px;top:711px" width="13" height="13" viewBox="0 0 13 13"><rect x="3.5" y="0.5" width="9" height="9" fill="none" stroke="#afb1b3"/><path d="M0.5 3V12.5H10" fill="none" stroke="#afb1b3"/></svg>
<div class="t" style="left:27px;top:710px">Build completed successfully with 1 warning in 7 s 192 ms (a minute ago)</div>
<div class="t" style="left:1158px;top:710px">10:1</div>
<div class="t" style="left:1194px;top:710px">CRLF</div>
<div class="t" style="left:1234px;top:710px;color:#6f7173">UTF-8</div>
<div class="t" style="left:1280px;top:710px">4 spaces</div>
<svg class="a" style="left:1342px;top:711px" width="12" height="13" viewBox="0 0 12 13"><path d="M1.5 6V3.5A2.3 2.3 0 0 1 6 3.5V5" fill="none" stroke="#afb1b3" stroke-width="1.3"/><rect x="3" y="6" width="9" height="7" fill="#afb1b3"/></svg>
<!-- TASKBAR -->
<div class="a" style="left:0;top:728px;width:1366px;height:8px;background:linear-gradient(90deg,#2a1d16 0px,#15131a 80px,#0e1016 200px,#0e1016 100%)"></div>
<div class="a" style="left:442px;top:728px;width:48px;height:8px;background:#3b3b40"></div>
<div class="t" style="left:1262px;top:728px;height:8px;overflow:hidden;color:#fff;font-size:12px;line-height:20px"><div style="margin-top:1px">16:50</div></div>
<div class="a" style="left:1361px;top:728px;width:1px;height:8px;background:#d8d8d8"></div>
</body></html>
